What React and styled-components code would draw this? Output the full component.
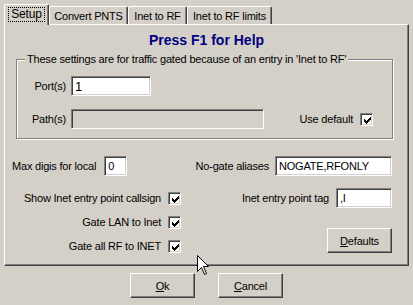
import styled, { createGlobalStyle } from "styled-components";

const GlobalStyle = createGlobalStyle`
  html, body {
    margin: 0;
    padding: 0;
    background: #d4d0c8;
  }
  body {
    font-family: "Liberation Sans", Arial, sans-serif;
    font-size: 11px;
    letter-spacing: -0.2px;
    color: #000;
  }
`;

const Dialog = styled.div`
  position: relative;
  width: 413px;
  height: 305px;
  background: #d4d0c8;
  overflow: hidden;
`;

const TabStrip = styled.div`
  position: relative;
  z-index: 1;
  display: flex;
  align-items: flex-end;
  height: 24px;
  padding-left: 4px;
`;

const Tab = styled.div`
  box-sizing: border-box;
  width: ${p => p.$w}px;
  height: ${p => (p.$active ? 21 : 18)}px;
  margin-bottom: ${p => (p.$active ? -1 : 0)}px;
  display: flex;
  align-items: center;
  justify-content: center;
  padding-bottom: ${p => (p.$active ? 2 : 0)}px;
  background: #d4d0c8;
  border-top: 1px solid #fff;
  border-left: 1px solid #fff;
  border-right: 1px solid #404040;
  border-radius: 2px 2px 0 0;
  box-shadow: inset -1px 0 #808080;
  white-space: nowrap;
  font-size: ${p => (p.$active ? 12 : 11)}px;
`;

const Focus = styled.span`
  outline: 1px dotted #000;
  padding: 0 2px;
  line-height: 13px;
`;

const Panel = styled.div`
  box-sizing: border-box;
  width: 405px;
  height: 242px;
  margin-left: 4px;
  padding: 0 16px 0 7px;
  border: 1px solid;
  border-color: #fff #404040 #404040 #fff;
  box-shadow: inset -1px -1px #808080;
`;

const Title = styled.h1`
  margin: 7px -16px 0 -7px;
  font-size: 14px;
  line-height: 16px;
  letter-spacing: 0;
  font-weight: bold;
  color: #000080;
  text-align: center;
`;

const GroupBox = styled.div`
  box-sizing: border-box;
  width: 377px;
  margin: 11px 0 0 4px;
  padding: 0 19px 9px 0;
  border: 1px solid #808080;
  box-shadow: inset 1px 1px #fff, 1px 1px #fff;
`;

const GroupLabel = styled.div`
  display: table;
  margin: -7px 0 0 8px;
  padding: 0 2px;
  line-height: 13px;
  background: #d4d0c8;
`;

const FieldRow = styled.div`
  display: flex;
  align-items: center;
  height: 20px;
  margin-top: ${p => p.$top}px;
`;

const FieldLabel = styled.span`
  width: 49px;
  margin-right: 5px;
  text-align: right;
`;

const TextBox = styled.input`
  box-sizing: border-box;
  width: ${p => p.$w}px;
  height: 20px;
  margin: 0 0 0 ${p => p.$gap || 0}px;
  padding: 0 3px;
  font: ${p => p.$big ? 13 : 11}px "Liberation Sans", Arial, sans-serif;
  letter-spacing: inherit;
  color: #000;
  background: ${p => (p.disabled ? "#d4d0c8" : "#fff")};
  border: 1px solid;
  border-color: #808080 #fff #fff #808080;
  box-shadow: inset 1px 1px #404040, inset -1px -1px #d4d0c8;
  outline: none;
`;

const CheckLine = styled.label`
  display: flex;
  align-items: center;
  gap: 7px;
  height: ${p => p.$h || 20}px;
  margin-left: ${p => (p.$push ? "auto" : 0)};
`;

const CheckBox = styled.span`
  box-sizing: border-box;
  width: 13px;
  height: 13px;
  padding: 3px 0 0 3px;
  background: #fff;
  border: 1px solid;
  border-color: #808080 #fff #fff #808080;
  box-shadow: inset 1px 1px #404040, inset -1px -1px #d4d0c8;
  svg {
    display: block;
  }
`;

const MiscRow = styled.div`
  display: flex;
  justify-content: space-between;
  align-items: center;
  height: 20px;
  margin-top: 17px;
`;

const Pair = styled.div`
  display: flex;
  align-items: center;
`;

const Lower = styled.div`
  display: flex;
  margin-top: 10px;
`;

const LeftCol = styled.div`
  width: 169px;
  display: flex;
  flex-direction: column;
  align-items: flex-end;
`;

const RightCol = styled.div`
  flex: 1;
  display: flex;
  flex-direction: column;
  align-items: flex-end;
`;

const TagRow = styled.div`
  display: flex;
  align-items: center;
  height: 24px;
`;

const Button = styled.button`
  box-sizing: border-box;
  width: 65px;
  height: 25px;
  margin-top: ${p => p.$top || 0}px;
  padding: 0;
  font: 11px "Liberation Sans", Arial, sans-serif;
  letter-spacing: inherit;
  color: #000;
  background: #d4d0c8;
  border: 1px solid;
  border-color: #fff #404040 #404040 #fff;
  box-shadow: inset -1px -1px #808080;
  u {
    text-decoration: underline;
  }
`;

const ButtonBar = styled.div`
  display: flex;
  justify-content: center;
  gap: 23px;
  margin-top: 7px;
`;

const Cursor = styled.svg`
  position: absolute;
  left: 197px;
  top: 255px;
  z-index: 5;
`;

const Tick = () => (
  <svg width="7" height="7" viewBox="0 0 7 7" shapeRendering="crispEdges">
    <path
      fill="#000"
      d="M6 0h1v1h-1zM5 1h2v1h-2zM0 2h1v1h-1zM4 2h3v1h-3zM0 3h2v1h-2zM3 3h3v1h-3zM0 4h5v1h-5zM1 5h3v1h-3zM2 6h1v1h-1z"
    />
  </svg>
);

const Check = ({ label, h, push }) => (
  <CheckLine $h={h} $push={push}>
    <span>{label}</span>
    <CheckBox>
      <Tick />
    </CheckBox>
  </CheckLine>
);

const tabs = [
  { name: "Setup", w: 45 },
  { name: "Convert PNTS", w: 79 },
  { name: "Inet to RF", w: 59 },
  { name: "Inet to RF limits", w: 85 },
];

export default function App() {
  return (
    <Dialog>
      <GlobalStyle />
      <TabStrip>
        {tabs.map((t, i) => (
          <Tab key={t.name} $w={t.w} $active={i === 0}>
            {i === 0 ? <Focus>{t.name}</Focus> : t.name}
          </Tab>
        ))}
      </TabStrip>
      <Panel>
        <Title>Press F1 for Help</Title>
        <GroupBox>
          <GroupLabel>These settings are for traffic gated because of an entry in 'Inet to RF'</GroupLabel>
          <FieldRow $top={10}>
            <FieldLabel>Port(s)</FieldLabel>
            <TextBox $w={80} $big defaultValue="1" readOnly />
          </FieldRow>
          <FieldRow $top={13}>
            <FieldLabel>Path(s)</FieldLabel>
            <TextBox $w={193} disabled />
            <Check label="Use default" push />
          </FieldRow>
        </GroupBox>
        <MiscRow>
          <Pair>
            <span>Max digis for local</span>
            <TextBox $w={23} $gap={8} defaultValue="0" readOnly />
          </Pair>
          <Pair>
            <span>No-gate aliases</span>
            <TextBox $w={117} $gap={6} defaultValue="NOGATE,RFONLY" readOnly />
          </Pair>
        </MiscRow>
        <Lower>
          <LeftCol>
            <Check label="Show Inet entry point callsign" h={24} />
            <Check label="Gate LAN to Inet" h={24} />
            <Check label="Gate all RF to INET" h={24} />
          </LeftCol>
          <RightCol>
            <TagRow>
              <span>Inet entry point tag</span>
              <TextBox $w={56} $gap={7} defaultValue=",I" readOnly />
            </TagRow>
            <Button $top={18}>
              <u>D</u>efaults
            </Button>
          </RightCol>
        </Lower>
      </Panel>
      <ButtonBar>
        <Button>
          <u>O</u>k
        </Button>
        <Button>
          <u>C</u>ancel
        </Button>
      </ButtonBar>
      <Cursor width="13" height="21" viewBox="0 0 13 21">
        <path
          d="M0.5 0.5 V16.5 L4.5 12.5 L7.5 19.5 L9.5 18.5 L6.5 11.5 H11.5 Z"
          fill="#fff"
          stroke="#000"
          strokeWidth="1"
          strokeLinejoin="miter"
        />
      </Cursor>
    </Dialog>
  );
}
